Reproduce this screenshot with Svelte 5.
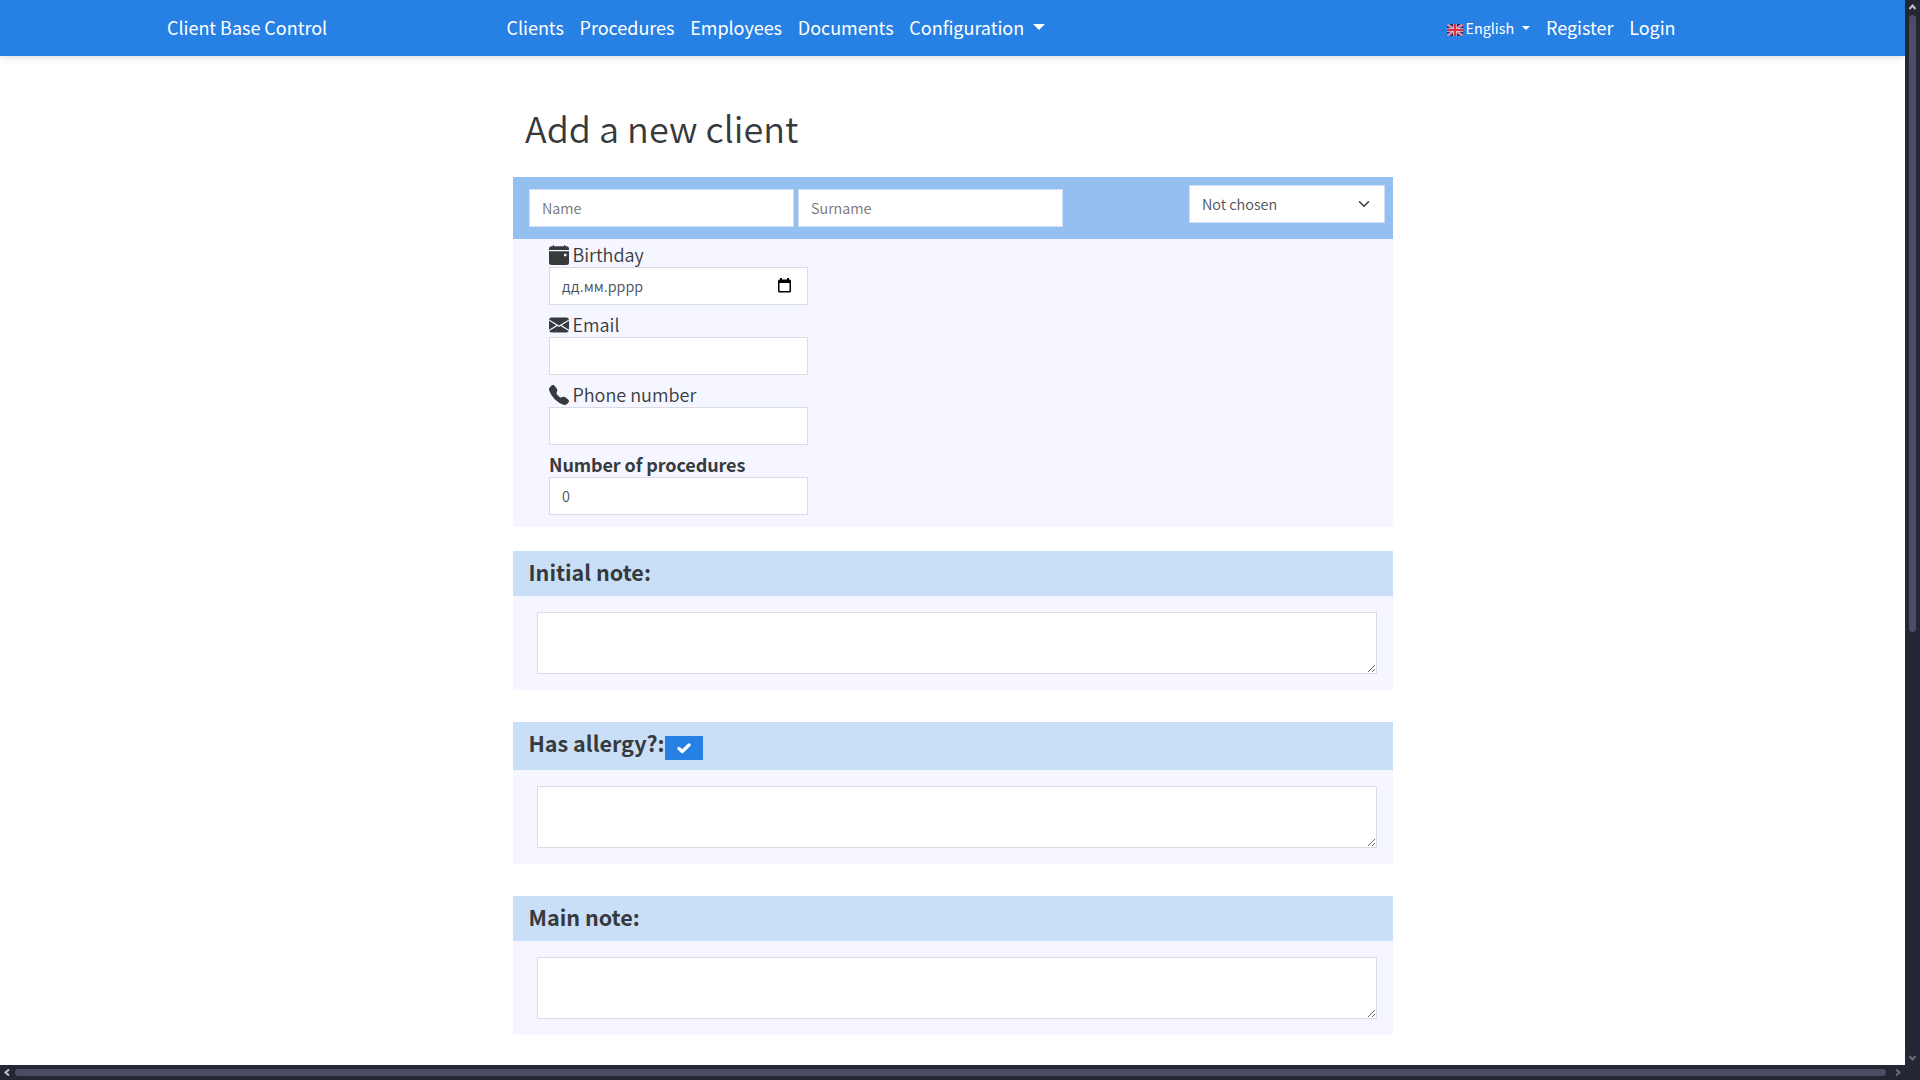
<script>
  const links = ['Clients', 'Procedures', 'Employees', 'Documents'];
  const fields = [
    { id: 'email', label: 'Email' },
    { id: 'phone', label: 'Phone number' }
  ];
</script>

<div class="window">
  <div class="viewport">
    <nav>
      <a class="brand" href="#home">Client Base Control</a>
      <div class="links">
        {#each links as label}
          <a href="#{label}">{label}</a>
        {/each}
        <a href="#config">Configuration<svg class="caret" width="12" height="6" viewBox="0 0 12 6"><path d="M0 0H12L6 6Z" fill="#fff" /></svg></a>
      </div>
      <div class="account">
        <a class="lang" href="#lang">
          <svg class="flag" width="16" height="12" viewBox="0 0 16 12">
            <rect width="16" height="12" fill="#1c2a72" />
            <path d="M0 0L16 12M16 0L0 12" stroke="#e8c3d4" stroke-width="2.4" />
            <path d="M0 0L16 12M16 0L0 12" stroke="#d8344e" stroke-width="0.9" />
            <path d="M8 0V12M0 6H16" stroke="#eccbd8" stroke-width="3.600" />
            <path d="M8 0V12M0 6H16" stroke="#dc2f48" stroke-width="2.2" />
          </svg><span>English</span><svg class="caret" width="8" height="4" viewBox="0 0 8 4"><path d="M0 0H8L4 4Z" fill="#fff" /></svg>
        </a>
        <a class="register" href="#register">Register</a>
        <a class="login" href="#login">Login</a>
      </div>
    </nav>

    <main>
      <h1>Add a new client</h1>

      <section class="client">
        <header>
          <div class="names">
            <input class="control" placeholder="Name" />
            <input class="control" placeholder="Surname" />
          </div>
          <div class="control select">
            <span>Not chosen</span>
            <svg width="16" height="12" viewBox="0 0 16 16"><path d="M2 5l6 6 6-6" fill="none" stroke="#343a40" stroke-width="2" stroke-linecap="round" stroke-linejoin="round" /></svg>
          </div>
        </header>
        <div class="details">
          <div class="field">
            <label for="birthday">
              <svg width="20" height="20" viewBox="0 0 16 16" fill="currentColor"><path d="M4 .5a.5.5 0 0 0-1 0V1H2a2 2 0 0 0-2 2v1h16V3a2 2 0 0 0-2-2h-1V.5a.5.5 0 0 0-1 0V1H4V.5zM16 14V5H0v9a2 2 0 0 0 2 2h12a2 2 0 0 0 2-2zm-3.5-7h1a.5.5 0 0 1 .5.5v1a.5.5 0 0 1-.5.5h-1a.5.5 0 0 1-.5-.5v-1a.5.5 0 0 1 .5-.5z" /></svg>
              <span>Birthday</span>
            </label>
            <div id="birthday" class="control date">
              <span>дд.мм.рррр</span>
              <svg width="13" height="15" viewBox="0 0 13 15"><path d="M2 0h2v1.5h5V0h2v1.5h.5A1.5 1.5 0 0 1 13 3v10a1.5 1.5 0 0 1-1.5 1.5h-10A1.500 1.500 0 0 1 0 13V3a1.500 1.500 0 0 1 1.500-1.500H2zM1.500 5v8h10V5z" fill="#000" fill-rule="evenodd" /></svg>
            </div>
          </div>
          {#each fields as f}
            <div class="field">
              <label for={f.id}>
                <svg width="20" height="20" viewBox="0 0 16 16" fill="currentColor">
                  {#if f.id === 'email'}
                    <path d="M.05 3.555A2 2 0 0 1 2 2h12a2 2 0 0 1 1.950 1.555L8 8.414.05 3.555zM0 4.697v7.104l5.803-3.558L0 4.697zM6.761 8.830l-6.570 4.027A2 2 0 0 0 2 14h12a2 2 0 0 0 1.808-1.144l-6.570-4.027L8 9.586l-1.239-.757zm3.436-.586L16 11.801V4.697l-5.803 3.546z" />
                  {:else}
                    <path fill-rule="evenodd" d="M1.885.511a1.745 1.745 0 0 1 2.610.163L6.290 2.980c.329.423.445.974.315 1.494l-.547 2.190a.678.678 0 0 0 .178.643l2.457 2.457a.678.678 0 0 0 .644.178l2.189-.547a1.745 1.745 0 0 1 1.494.315l2.306 1.794c.829.645.905 1.870.163 2.611l-1.034 1.034c-.740.740-1.846 1.065-2.877.702a18.634 18.634 0 0 1-7.010-4.420 18.634 18.634 0 0 1-4.420-7.009c-.362-1.030-.037-2.137.703-2.877L1.885.511z" />
                  {/if}
                </svg>
                <span>{f.label}</span>
              </label>
              <input id={f.id} class="control" />
            </div>
          {/each}
          <div class="field">
            <label for="count"><b>Number of procedures</b></label>
            <input id="count" class="control" value="0" />
          </div>
        </div>
      </section>

      <section class="note">
        <h2><span>Initial note:</span></h2>
        <div class="body"><textarea></textarea></div>
      </section>

      <section class="note">
        <h2 class="tall">
          <span>Has allergy?:</span>
          <button aria-label="Has allergy"><svg width="14" height="11" viewBox="0 0 14 11"><path d="M2 5.500L5.200 8.500L12 2" fill="none" stroke="#fff" stroke-width="3.300" stroke-linecap="round" stroke-linejoin="round" /></svg></button>
        </h2>
        <div class="body"><textarea></textarea></div>
      </section>

      <section class="note">
        <h2><span>Main note:</span></h2>
        <div class="body"><textarea></textarea></div>
      </section>
    </main>
  </div>

  <div class="vbar">
    <svg width="15" height="15" viewBox="0 0 15 15"><path d="M4.500 9L7.500 5.500L10.500 9" fill="none" stroke="#c3c4c9" stroke-width="2" /></svg>
    <div class="thumb"></div>
    <svg class="end" width="15" height="15" viewBox="0 0 15 15"><path d="M4.500 6L7.500 9.500L10.500 6" fill="none" stroke="#6b6e76" stroke-width="2" /></svg>
  </div>
  <div class="hbar">
    <svg width="15" height="15" viewBox="0 0 15 15"><path d="M9 4.500L5.500 7.500L9 10.500" fill="none" stroke="#c3c4c9" stroke-width="2" /></svg>
    <div class="thumb"></div>
    <svg class="end" width="15" height="15" viewBox="0 0 15 15"><path d="M6 4.500L9.500 7.500L6 10.500" fill="none" stroke="#6b6e76" stroke-width="2" /></svg>
  </div>
  <div class="corner"></div>
</div>

<style>
  :global(body) { margin: 0; overflow: hidden; }
  .window, .window * { box-sizing: border-box; }
  .window {
    width: 1920px;
    height: 1080px;
    display: grid;
    grid-template: 1065px 15px / 1905px 15px;
    font-family: 'Noto Sans CJK SC', 'Noto Sans', sans-serif;
    color: #373a3c;
    background: #fff;
  }
  .viewport { overflow: hidden; }

  nav {
    height: 56px;
    background: #2780e3;
    display: grid;
    grid-template-columns: 339.5px 940px auto;
    padding-left: 167px;
    box-shadow: 0 2px 4px rgba(0, 0, 0, 0.075), 0 4px 10px rgba(0, 0, 0, 0.04);
    font-size: 18px;
    line-height: 54px;
    letter-spacing: -0.03px;
  }
  nav a { height: 54px; color: #fff; text-decoration: none; white-space: nowrap; display: flex; align-items: center; }
  .links, .account { display: flex; gap: 15.8px; }
  .links .caret { margin: -1px 0 0 9px; }
  .lang { font-size: 14.4px; }
  .lang .flag { margin: 5px 3px 0 0; }
  .lang span { padding-top: 1px; }
  .lang .caret { margin: 2px 0 0 8px; }

  main { width: 880px; margin: 0 0 0 513px; }
  h1 { margin: 0; height: 121px; padding: 43px 0 0 12px; font-size: 36px; font-weight: 350; line-height: 56px; letter-spacing: 0; white-space: nowrap; }

  .client header {
    height: 62px;
    background: #95bff0;
    display: flex;
    justify-content: space-between;
    padding: 8px 8px 0 16px;
  }
  .names { display: flex; gap: 4px; padding-top: 4px; }
  .control {
    display: flex;
    align-items: center;
    height: 38px;
    border: 1px solid #d9dce6;
    border-radius: 0;
    background: #fff;
    color: #495057;
    padding: 0 12px 2px;
    font-family: inherit;
    font-size: 14.4px;
    font-weight: 350;
    outline: none;
  }
  .control::placeholder { color: #757575; opacity: 1; }
  .names .control { width: 265px; border-color: #cfdff5; }
  .select { width: 196px; justify-content: space-between; border-color: #cfdff5; }
  .select svg { margin-top: 2px; }
  .date svg { margin-right: 4px; }
  .date { justify-content: space-between; }
  .details { height: 288px; background: #f5f6ff; padding: 4px 0 0 36px; }
  .field { height: 70px; width: 259px; }
  .field .control { width: 259px; }
  label { display: flex; align-items: center; gap: 4px; height: 24px; font-size: 18px; font-weight: 350; line-height: 24px; white-space: nowrap; }
  label span, label b { padding-bottom: 2px; }
  label b { font-weight: 700; letter-spacing: -0.1px; }
  label svg { margin-left: -0.5px; }

  .note { margin-top: 32px; }
  .client + .note { margin-top: 24px; }
  h2 {
    margin: 0;
    height: 45px;
    padding-left: 15.5px;
    background: #c9dff7;
    display: flex;
    font-size: 21.6px;
    line-height: 42px;
    letter-spacing: -0.02px;
    font-weight: 700;
    white-space: nowrap;
  }
  .tall { height: 48px; }
  h2 button {
    width: 38px;
    height: 24px;
    margin: 14px 0 0 0.4px;
    padding: 0;
    border: 0;
    background: #2780e3;
    display: flex;
    align-items: center;
    justify-content: center;
  }
  .body { height: 94px; background: #f5f6ff; padding: 16px 16px 16px 24px; }
  textarea { display: block; width: 840px; height: 62px; border: 1px solid #d9dce6; background: #fff; outline: none; resize: vertical; }

  .vbar, .corner, .hbar { background: #232733; }
  .vbar, .hbar { display: flex; }
  .vbar { flex-direction: column; }
  .vbar .thumb { width: 7px; height: 617px; margin-left: 4px; border-radius: 4px; background: #4a4d64; }
  .hbar .thumb { width: 1871px; height: 7px; margin-top: 4px; border-radius: 4px; background: #4a4d64; }
  .vbar .end { margin-top: auto; }
  .hbar .end { margin-left: auto; }
</style>
